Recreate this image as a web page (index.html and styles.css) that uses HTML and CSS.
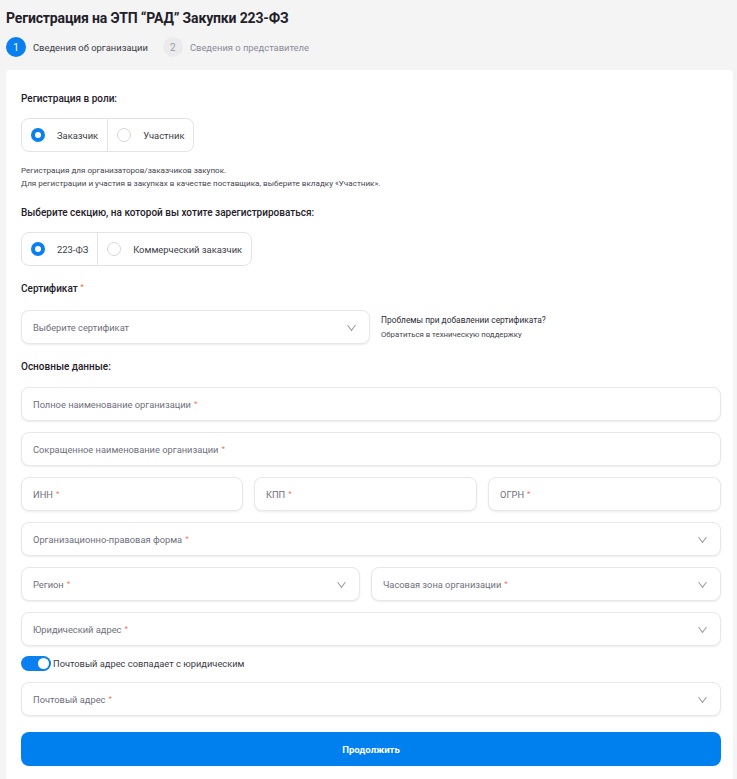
FILE: index.html
```html
<!DOCTYPE html>
<html lang="ru">
<head>
  <meta charset="UTF-8" />
  <meta name="viewport" content="width=device-width, initial-scale=1.0"/>
  <title>Регистрация на ЭТП “РАД”</title>
  <link rel="stylesheet" href="styles.css">
</head>
<body>

<!-- Header with steps -->
<header class="head">
  <h1>Регистрация на ЭТП “РАД” Закупки 223-ФЗ</h1>
  <div class="steps">
    <div class="step active"><span class="num">1</span>Сведения об организации</div>
    <div class="step"><span class="num">2</span>Сведения о представителе</div>
  </div>
</header>

<!-- Form card -->
<main class="card">
  <h3 class="label first">Регистрация в роли:</h3>
  <div class="radio-group">
    <label class="radio checked"><span class="dot"></span>Заказчик</label>
    <label class="radio"><span class="dot"></span>Участник</label>
  </div>
  <p class="hint">Регистрация для организаторов/заказчиков закупок.<br>
    Для регистрации и участия в закупках в качестве поставщика, выберите вкладку «Участник».</p>

  <h3 class="label">Выберите секцию, на которой вы хотите зарегистрироваться:</h3>
  <div class="radio-group">
    <label class="radio checked"><span class="dot"></span>223-ФЗ</label>
    <label class="radio"><span class="dot"></span>Коммерческий заказчик</label>
  </div>

  <h3 class="label">Сертификат <span class="req">*</span></h3>
  <div class="cert-row">
    <div class="field select cert">Выберите сертификат</div>
    <div class="support">
      <p>Проблемы при добавлении сертификата?</p>
      <a href="#">Обратиться в техническую поддержку</a>
    </div>
  </div>

  <h3 class="label">Основные данные:</h3>
  <div class="fields">
    <div class="field">Полное наименование организации <span class="req">*</span></div>
    <div class="field">Сокращенное наименование организации <span class="req">*</span></div>
    <div class="row three">
      <div class="field">ИНН <span class="req">*</span></div>
      <div class="field">КПП <span class="req">*</span></div>
      <div class="field">ОГРН <span class="req">*</span></div>
    </div>
    <div class="field select">Организационно-правовая форма <span class="req">*</span></div>
    <div class="row two">
      <div class="field select">Регион <span class="req">*</span></div>
      <div class="field select">Часовая зона организации <span class="req">*</span></div>
    </div>
    <div class="field select">Юридический адрес <span class="req">*</span></div>
  </div>

  <label class="switch"><span class="track"><span class="knob"></span></span>Почтовый адрес совпадает с юридическим</label>

  <div class="field select">Почтовый адрес <span class="req">*</span></div>

  <button class="submit">Продолжить</button>
</main>

</body>
</html>
```

FILE: styles.css
```css
body {
  margin: 0;
  background: #f4f4f5;
  font-family: Roboto, "Noto Sans", sans-serif;
  color: #1f2029;
}
.head {
  padding: 8px 6px 0;
}
h1 {
  margin: 0;
  font-size: 14px;
  line-height: 20px;
  font-weight: 700;
  letter-spacing: -0.15px;
}
.steps {
  display: flex;
  gap: 15px;
  margin-top: 9px;
}
.step {
  display: flex;
  align-items: center;
  gap: 7px;
  font-size: 9.4px;
  color: #8a8b96;
}
.step.active {
  color: #3a3b45;
}
.num {
  width: 20px;
  height: 20px;
  border-radius: 50%;
  background: #ebebed;
  color: #9a9ba4;
  display: flex;
  align-items: center;
  justify-content: center;
  font-size: 10px;
}
.step.active .num {
  background: #0a7ff0;
  color: #fff;
}

.card {
  background: #fff;
  margin: 13px 4px 0 6px;
  padding: 22px 12px 14px 15px;
  border-radius: 4px 4px 0 0;
}
.label {
  margin: 16px 0 0;
  font-size: 10px;
  line-height: 14px;
  font-weight: 500;
}
.label.first {
  margin-top: 0;
}
.req {
  color: #ee7a52;
  font-size: 8px;
  line-height: 0;
  vertical-align: 3px;
}

.radio-group {
  display: inline-flex;
  margin-top: 12px;
  border: 1px solid #e3e3e6;
  border-radius: 8px;
  height: 32px;
}
.radio {
  display: flex;
  align-items: center;
  gap: 12px;
  padding: 0 9px 0 9px;
  font-size: 9.4px;
  color: #3a3b45;
}
.radio + .radio {
  border-left: 1px solid #e3e3e6;
}
.dot {
  width: 14px;
  height: 14px;
  border-radius: 50%;
  border: 1px solid #d6d6da;
  box-sizing: border-box;
}
.radio.checked .dot {
  border: 4.5px solid #0a7ff0;
  background: #fff;
}
.hint {
  margin: 12px 0 0;
  font-size: 8.1px;
  line-height: 13px;
  color: #45464f;
}

.cert-row {
  display: flex;
  align-items: center;
  gap: 11px;
  margin-top: 14px;
}
.cert {
  width: 349px;
}
.support p {
  margin: 0;
  font-size: 8.4px;
  color: #2d2e37;
}
.support a {
  display: block;
  margin-top: 5px;
  font-size: 7.8px;
  color: #45464f;
  text-decoration: none;
}

.fields {
  display: flex;
  flex-direction: column;
  gap: 11px;
  margin-top: 13px;
}
.row {
  display: grid;
  gap: 11px;
}
.row.three {
  grid-template-columns: 222px 223px 1fr;
}
.row.two {
  grid-template-columns: 339px 1fr;
}
.field {
  box-sizing: border-box;
  height: 34px;
  display: flex;
  align-items: center;
  padding: 0 11px;
  border: 1px solid #e8e8eb;
  border-radius: 8px;
  box-shadow: 0 1px 2px rgba(0, 0, 0, 0.08);
  background: #fff;
  font-size: 9.3px;
  color: #6e6f7b;
  gap: 3px;
}
.field.select {
  position: relative;
}
/* chevron for dropdown fields */
.field.select::after {
  content: "";
  position: absolute;
  right: 14px;
  top: 11px;
  width: 6px;
  height: 6px;
  border-right: 1px solid #9a9ba4;
  border-bottom: 1px solid #9a9ba4;
  transform: rotate(45deg) skew(8deg, 8deg);
}

.switch {
  display: flex;
  align-items: center;
  gap: 2px;
  margin: 10px 0 11px;
  font-size: 9.3px;
  color: #3a3b45;
}
.track {
  width: 30px;
  height: 15px;
  border-radius: 8px;
  background: #0a7ff0;
  position: relative;
}
.knob {
  position: absolute;
  right: 2px;
  top: 2px;
  width: 11px;
  height: 11px;
  border-radius: 50%;
  background: #fff;
}

.submit {
  display: block;
  width: 100%;
  height: 34px;
  margin-top: 16px;
  border: none;
  border-radius: 8px;
  background: #0080ee;
  color: #fff;
  font-family: inherit;
  font-size: 9.5px;
  font-weight: 700;
  cursor: pointer;
}
```
